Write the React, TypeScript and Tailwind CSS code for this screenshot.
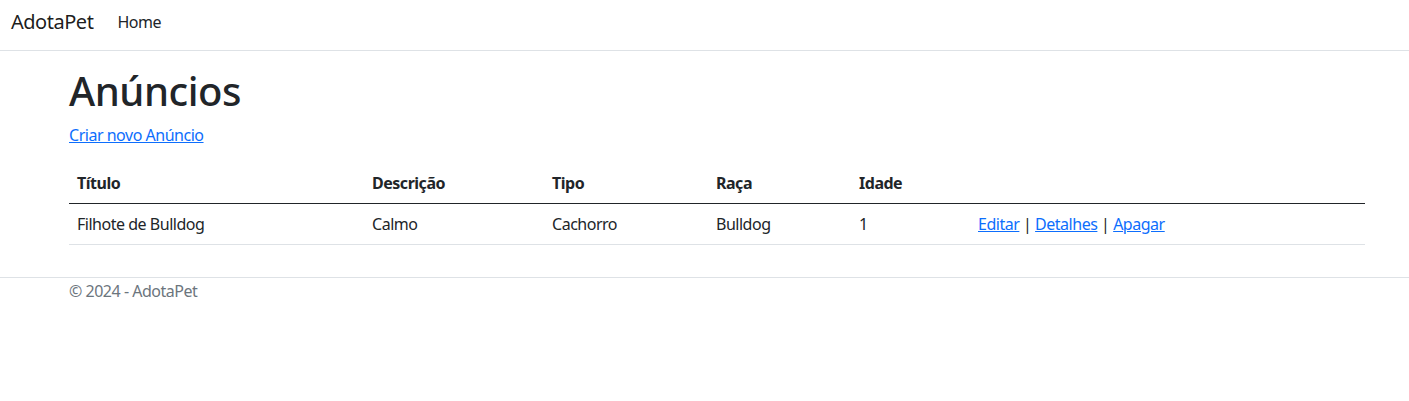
import React from 'react';

const COLS = [
  { key: 'titulo', label: 'Título', w: 'w-[295px]' },
  { key: 'descricao', label: 'Descrição', w: 'w-[180px]' },
  { key: 'tipo', label: 'Tipo', w: 'w-[164px]' },
  { key: 'raca', label: 'Raça', w: 'w-[143px]' },
  { key: 'idade', label: 'Idade', w: 'w-[119px]' },
];

const ANUNCIOS = [
  { id: 1, titulo: 'Filhote de Bulldog', descricao: 'Calmo', tipo: 'Cachorro', raca: 'Bulldog', idade: '1' },
];

export default function App() {
  return (
    <div className="min-h-[401px] bg-white text-[#212529] text-[16px] leading-[24px] tracking-[-0.03em] font-['Noto_Sans','Open_Sans',sans-serif]">
      {/* NAVBAR */}
      <nav className="h-[51px] border-b border-[#dee2e6] pb-[6px] pl-[11px] flex items-center">
        <a href="#" className="text-[20px] leading-[30px] text-black/90 no-underline">AdotaPet</a>
        <a href="#" className="ml-[24px] text-[16px] leading-[24px] text-[#212529] no-underline">Home</a>
      </nav>

      {/* MAIN */}
      <main className="pl-[69px] pt-[16px]">
        <div className="w-[1296px]">
          <h1 className="text-[40px] leading-[48px] font-medium mb-[8px]">Anúncios</h1>
          <p className="mb-[16px]">
            <a href="#" className="text-[#0d6efd] underline">Criar novo Anúncio</a>
          </p>

          <table className="w-full border-collapse mb-[16px] text-left">
            <thead>
              <tr className="border-b border-[#212529]">
                {COLS.map(c => (
                  <th key={c.key} className={`${c.w} p-[8px] font-bold`}>{c.label}</th>
                ))}
                <th className="p-[8px]"></th>
              </tr>
            </thead>
            <tbody>
              {ANUNCIOS.map(a => (
                <tr key={a.id} className="border-b border-[#dee2e6]">
                  <td className="p-[8px]">{a.titulo}</td>
                  <td className="p-[8px]">{a.descricao}</td>
                  <td className="p-[8px]">{a.tipo}</td>
                  <td className="p-[8px]">{a.raca}</td>
                  <td className="p-[8px]">{a.idade}</td>
                  <td className="p-[8px]">
                    <a href="#" className="text-[#0d6efd] underline">Editar</a> |{' '}
                    <a href="#" className="text-[#0d6efd] underline">Detalhes</a> |{' '}
                    <a href="#" className="text-[#0d6efd] underline">Apagar</a>
                  </td>
                </tr>
              ))}
            </tbody>
          </table>
        </div>
      </main>

      {/* FOOTER */}
      <footer className="mt-[32px] border-t border-[#dee2e6] pl-[69px] pt-[1px] text-[#6c757d]">
        © 2024 - AdotaPet
      </footer>
    </div>
  );
}
